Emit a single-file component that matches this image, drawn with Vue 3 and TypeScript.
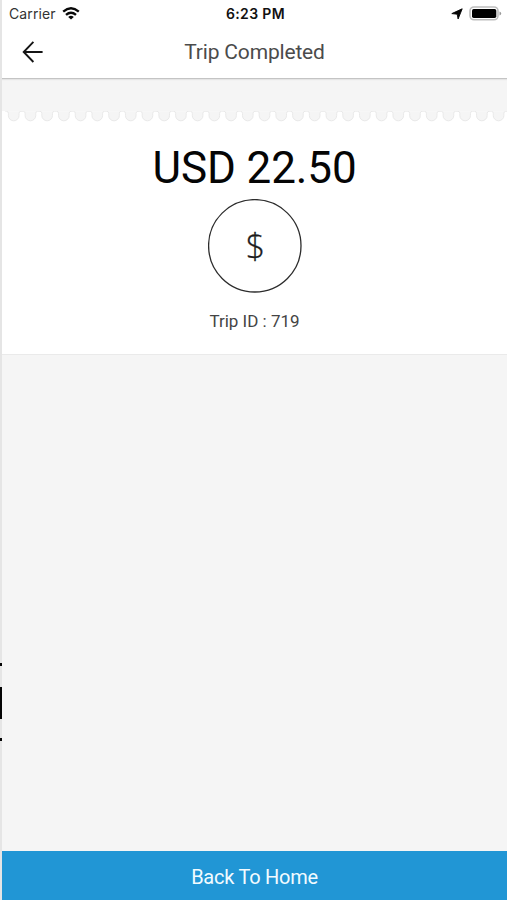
<script setup lang="ts">
const trip = { currency: 'USD', fare: '22.50', id: 719 }
const period = 16.72
const notches: number[] = Array.from({ length: 30 }, (_, i) => 11.7 + i * period)
const notchPath = (x: number): string =>
  `M${x - 8.36} .3H${x - 7.2}Q${x - 5.3} .3 ${x - 5.3} 2.4V4.6A5.3 5.2 0 0 0 ${x + 5.3} 4.6V2.4Q${x + 5.3} .3 ${x + 7.2} .3H${x + 8.36}`
</script>

<template>
  <div class="screen">
    <aside class="edge">
      <i class="mark tick"></i>
      <i class="mark bar"></i>
      <i class="mark tick"></i>
    </aside>
    <div class="page">
      <header class="header">
        <div class="status">
          <div class="network">
            <span class="carrier">Carrier</span>
            <svg class="wifi" width="18" height="14" viewBox="0 0 18 14">
              <g fill="none" stroke="#080808" stroke-width="2.4">
                <path d="M1.2 4.6Q9 -2 16.8 4.6" />
                <path d="M4 7.8Q9 3.6 14 7.8" />
              </g>
              <path d="M6.2 9.9Q9 7.7 11.8 9.9L9 12.6Z" fill="#080808" />
            </svg>
          </div>
          <span class="time">6:23 PM</span>
          <div class="power">
            <svg width="12" height="12" viewBox="0 0 12 12">
              <path d="M11.2 .8L7.1 11L6.2 6.2L.8 5.6Z" fill="#050505" stroke="#050505" stroke-width=".9" stroke-linejoin="round" />
            </svg>
            <svg width="33" height="16" viewBox="0 0 33 16">
              <rect x="1" y="1" width="28" height="12.8" rx="4" fill="#fff" stroke="#bdbdbd" stroke-width="1.6" />
              <rect x="3" y="3" width="24.3" height="9" rx="1.7" fill="#000" />
              <path d="M30.5 5.4Q32.2 6 32.2 7.4T30.5 9.4Z" fill="#999" />
            </svg>
          </div>
        </div>
        <div class="toolbar">
          <button class="back" type="button" aria-label="Back">
            <svg width="22" height="22" viewBox="0 0 22 22" fill="none" stroke="#151515" stroke-width="1.9">
              <path d="M11.4 .9L1.7 11L11.4 21M1.7 11H20.6" />
            </svg>
          </button>
          <h1 class="title">Trip Completed</h1>
        </div>
      </header>

      <main class="receipt">
        <svg class="tear" width="505" height="12" viewBox="0 0 505 12">
          <path v-for="x in notches" :key="x" :d="notchPath(x)" fill="#f5f5f5" stroke="#e9e9e9" />
        </svg>
        <p class="fare">{{ trip.currency }} {{ trip.fare }}</p>
        <div class="coin">
          <svg width="94" height="94" viewBox="0 0 94 94">
            <circle cx="46.8" cy="46.8" r="46.2" fill="none" stroke="#2c2c2c" stroke-width="1.3" />
          </svg>
          <span class="symbol">$</span>
        </div>
        <p class="trip-id">Trip ID : {{ trip.id }}</p>
      </main>

      <button class="home" type="button">Back To Home</button>
    </div>
  </div>
</template>

<style>
body {
  margin: 0;
}
</style>

<style scoped>
* {
  box-sizing: border-box;
}

.screen {
  display: flex;
  width: 507px;
  height: 900px;
  overflow: hidden;
  background: #f5f5f5;
  font-family: Roboto, sans-serif;
}

.edge {
  display: flex;
  flex-direction: column;
  width: 2px;
  padding-top: 663px;
  background: #e5e5e5;
}

.mark {
  display: block;
  background: #050505;
}

.tick {
  height: 3px;
}

.bar {
  height: 32px;
  margin: 21px 0 19px;
}

.page {
  display: flex;
  flex-direction: column;
  width: 505px;
}

.header {
  height: 79px;
  background: #fff;
  border-bottom: 1px solid #c4c4c4;
  box-shadow: 0 1px 1px #e5e5e5;
}

.status {
  display: grid;
  grid-template-columns: 1fr auto 1fr;
  align-items: center;
  height: 27px;
  padding: 0 5px 0 7px;
}

.network,
.power {
  display: flex;
  align-items: center;
}

.carrier {
  color: #333;
  font-family: Inter, sans-serif;
  font-size: 14px;
  letter-spacing: 0.1px;
}

.wifi {
  margin-left: 6px;
}

.time {
  color: #111;
  font-family: Inter, sans-serif;
  font-size: 14px;
  font-weight: 600;
  letter-spacing: 0.35px;
}

.power {
  justify-content: flex-end;
  gap: 6px;
}

.toolbar {
  display: grid;
  grid-template-columns: 60px 1fr 60px;
  align-items: center;
  height: 50px;
}

.back {
  display: flex;
  padding: 0 0 0 20px;
  border: 0;
  background: none;
}

.title {
  margin: 0;
  color: #4b4b4b;
  font-size: 21px;
  font-weight: 400;
  letter-spacing: -0.18px;
  line-height: 28px;
  text-align: center;
}

.receipt {
  display: flex;
  flex-direction: column;
  align-items: center;
  height: 244px;
  margin-top: 32px;
  background: #fff;
  border-bottom: 1px solid #eaeaea;
}

.tear {
  display: block;
  flex: none;
}

.fare {
  margin: 18px 0 0;
  color: #050505;
  font-size: 44px;
  letter-spacing: -0.1px;
  line-height: 54px;
}

.coin {
  display: grid;
  flex: none;
  place-items: center;
  width: 94px;
  height: 94px;
  margin-top: 4px;
}

.coin > * {
  grid-area: 1 / 1;
}

.symbol {
  padding: 0 0 1px 2px;
  color: #1b1b1b;
  font-family: "Open Sans", sans-serif;
  font-size: 34px;
  font-weight: 300;
  line-height: 40px;
  -webkit-text-stroke: 0.3px #1b1b1b;
}

.trip-id {
  margin: 18px 0 0;
  color: #444;
  font-size: 17px;
  line-height: 20px;
}

.home {
  height: 49px;
  margin-top: auto;
  padding: 2px 0 0;
  border: 0;
  background: #2196d5;
  color: #f2fbff;
  font: 400 20px/24px Roboto, sans-serif;
  letter-spacing: -0.25px;
}
</style>
